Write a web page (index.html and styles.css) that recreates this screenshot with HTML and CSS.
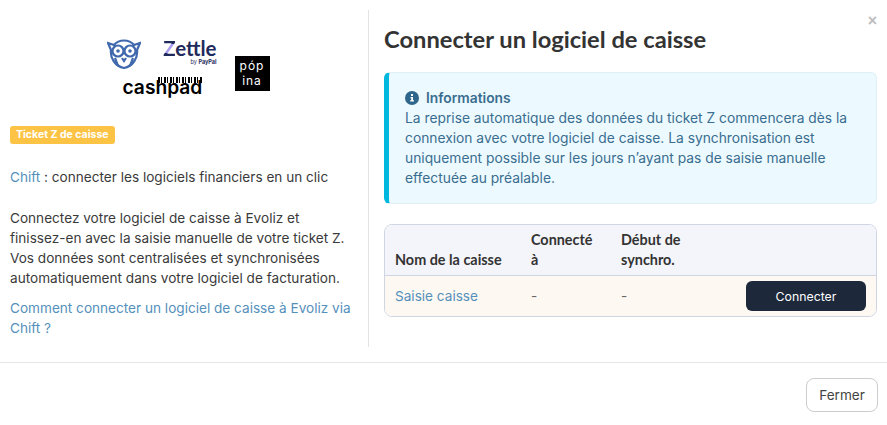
FILE: index.html
```html
<!DOCTYPE html>
<html lang="fr">
<head>
  <meta charset="UTF-8">
  <title>Connecter un logiciel de caisse</title>
  <link rel="stylesheet" href="styles.css">
</head>
<body>
  <div class="modal">
    <button class="close" type="button">&times;</button>
    <div class="modal-body">
      <!-- Left column -->
      <div class="side">
        <div class="logos">
          <div class="logos-stack">
            <div class="logos-row">
              <svg class="owl" width="34" height="32" viewBox="0 0 34 32" fill="none" stroke="#3f68ad" stroke-width="2.2">
                <path d="M1 5 L7 7 C12 1 22 1 27 7 L33 5 L30 12 C31 20 26 28 17 30 C8 28 3 20 4 12 Z" />
                <circle cx="11" cy="13" r="5.5" />
                <circle cx="23" cy="13" r="5.5" />
                <circle cx="11" cy="13" r="1.8" fill="#3f68ad" stroke="none" />
                <circle cx="23" cy="13" r="1.8" fill="#3f68ad" stroke="none" />
                <path d="M15 20 L17 23 L19 20" />
                <path d="M8 20 L11 28 M26 20 L23 28" />
              </svg>
              <div class="zettle">
                <span class="zettle-name"><span class="zettle-z">Z</span>ettle</span>
                <span class="zettle-by">by <b>PayPal</b></span>
              </div>
            </div>
            <div class="cashpad">
              <span class="barcode"></span>
              <span class="cashpad-name">cashpad</span>
            </div>
          </div>
          <div class="popina"><span>póp</span><span>ina</span></div>
        </div>
        <span class="badge">Ticket Z de caisse</span>
        <p class="chift"><a href="#">Chift</a> : connecter les logiciels financiers en un clic</p>
        <p class="intro">Connectez votre logiciel de caisse à Evoliz et finissez-en avec la saisie manuelle de votre ticket Z. Vos données sont centralisées et synchronisées automatiquement dans votre logiciel de facturation.</p>
        <p class="help"><a href="#">Comment connecter un logiciel de caisse à Evoliz via Chift ?</a></p>
      </div>

      <!-- Right column -->
      <div class="main">
        <h2>Connecter un logiciel de caisse</h2>
        <div class="alert">
          <div class="alert-title">
            <svg width="14" height="14" viewBox="0 0 14 14">
              <circle cx="7" cy="7" r="7" fill="#2f668c" />
              <rect x="6" y="3" width="2" height="2" fill="#fff" />
              <path d="M5.5 6h2.5v3.2h1v1.3H5.2V9.2h1V7.3h-.7z" fill="#fff" />
            </svg>
            Informations
          </div>
          <p>La reprise automatique des données du ticket Z commencera dès la connexion avec votre logiciel de caisse. La synchronisation est uniquement possible sur les jours n’ayant pas de saisie manuelle effectuée au préalable.</p>
        </div>
        <div class="table-wrap">
          <table>
            <thead>
              <tr>
                <th class="col-name">Nom de la caisse</th>
                <th class="col-to">Connecté à</th>
                <th class="col-start">Début de synchro.</th>
                <th></th>
              </tr>
            </thead>
            <tbody>
              <tr>
                <td><a href="#">Saisie caisse</a></td>
                <td class="muted">-</td>
                <td class="muted">-</td>
                <td class="action"><button class="btn-dark" type="button">Connecter</button></td>
              </tr>
            </tbody>
          </table>
        </div>
      </div>
    </div>
    <div class="modal-footer">
      <button class="btn-light" type="button">Fermer</button>
    </div>
  </div>
</body>
</html>
```

FILE: styles.css
```css
* {
  box-sizing: border-box;
}

body {
  margin: 0;
  background: #fff;
  font-family: "Inter", "Liberation Sans", sans-serif;
  font-size: 13.6px;
  color: #3a3a3a;
}

a {
  color: #5590bb;
  text-decoration: none;
}

p {
  margin: 0;
}

.modal {
  position: relative;
  width: 887px;
  height: 425px;
  overflow: hidden;
}

.close {
  position: absolute;
  top: 13px;
  right: 10px;
  padding: 0;
  border: none;
  background: none;
  color: #bdbdbd;
  font-size: 16px;
  font-weight: 700;
  line-height: 16px;
}

.modal-body {
  display: flex;
  height: 363px;
  padding-top: 10px;
  padding-bottom: 15px;
  border-bottom: 1px solid #e6e6e6;
}

.side {
  width: 369px;
  padding: 0 15px 0 10px;
  border-right: 1px solid #e3e3e3;
}

.logos {
  display: flex;
  justify-content: center;
  align-items: flex-start;
  gap: 18px;
  height: 115px;
  padding-top: 28px;
  padding-left: 13px;
}

.logos-stack {
  width: 110px;
}

.logos-row {
  display: flex;
  justify-content: space-between;
  align-items: flex-start;
  height: 38px;
}

.zettle {
  display: flex;
  flex-direction: column;
  align-items: flex-end;
  line-height: 1;
}

.zettle-name {
  height: 22px;
  font-family: "Lato", sans-serif;
  font-size: 20.5px;
  font-weight: 700;
  color: #1f2a5c;
}

.zettle-z {
  background: linear-gradient(#1f2a5c 32%, #a99cf0 32%, #a99cf0 72%, #1f2a5c 72%);
  -webkit-background-clip: text;
  background-clip: text;
  color: transparent;
}

.zettle-by {
  font-size: 5.5px;
  color: #1f2a5c;
}

.cashpad {
  position: relative;
  width: 80px;
  height: 22px;
  margin-left: 16px;
  line-height: 22px;
}

.cashpad-name {
  position: relative;
  font-size: 19.2px;
  font-weight: 600;
  color: #000;
}

.barcode {
  position: absolute;
  top: 1px;
  right: 1px;
  width: 44px;
  height: 6px;
  background: repeating-linear-gradient(90deg, #000 0 2px, #fff 2px 3px, #000 3px 4px, #fff 4px 6px);
}

.popina {
  display: flex;
  flex-direction: column;
  align-items: center;
  justify-content: center;
  width: 35px;
  height: 35px;
  margin-top: 18px;
  background: #000;
  color: #fff;
  font-size: 12px;
  line-height: 14.5px;
  letter-spacing: 1px;
}

.badge {
  display: inline-block;
  height: 18px;
  padding: 0 6px;
  border-radius: 3px;
  background: #fdc345;
  color: #fff;
  font-size: 10.5px;
  font-weight: 700;
  line-height: 18px;
}

.chift {
  margin-top: 23px;
  line-height: 20px;
}

.intro {
  margin-top: 21px;
  line-height: 20px;
}

.help {
  margin-top: 10px;
  line-height: 20px;
}

.main {
  flex: 1;
  padding: 0 10px 0 15px;
}

h2 {
  margin: 13px 0 17px;
  font-family: "Lato", sans-serif;
  font-size: 23.7px;
  font-weight: 700;
  line-height: 32px;
  color: #333;
}

.alert {
  height: 132px;
  padding: 15px 16px;
  border: 1px solid #dff0f5;
  border-left: 5px solid #00b8de;
  border-radius: 6px;
  background: #ecfaff;
  color: #3a6d8f;
  font-size: 13.8px;
  line-height: 20px;
}

.alert-title {
  display: flex;
  align-items: center;
  gap: 7px;
  font-weight: 600;
}

.table-wrap {
  margin-top: 20px;
  border: 1px solid #cfd5e3;
  border-radius: 8px;
  overflow: hidden;
}

table {
  width: 100%;
  border-collapse: collapse;
}

th {
  padding: 5px 10px;
  border-bottom: 1px solid #cfd5e3;
  background: #f4f5fa;
  color: #333;
  font-family: "Lato", sans-serif;
  font-size: 14.4px;
  font-weight: 700;
  line-height: 20px;
  text-align: left;
  vertical-align: bottom;
}

td {
  padding: 5px 10px;
  background: #fdf8f2;
}

.col-name {
  width: 136px;
}

.col-to {
  width: 90px;
}

.col-start {
  width: 110px;
}

.muted {
  color: #666;
}

.btn-dark {
  display: block;
  width: 120px;
  height: 30px;
  margin-left: auto;
  border: none;
  border-radius: 6px;
  background: #1d293b;
  color: #fff;
  font: inherit;
  font-size: 12.3px;
}

.modal-footer {
  display: flex;
  justify-content: flex-end;
  padding: 15px 9px;
}

.btn-light {
  width: 72px;
  height: 34px;
  border: 1px solid #ccc;
  border-radius: 8px;
  background: #fff;
  color: #444;
  font: inherit;
}
```
